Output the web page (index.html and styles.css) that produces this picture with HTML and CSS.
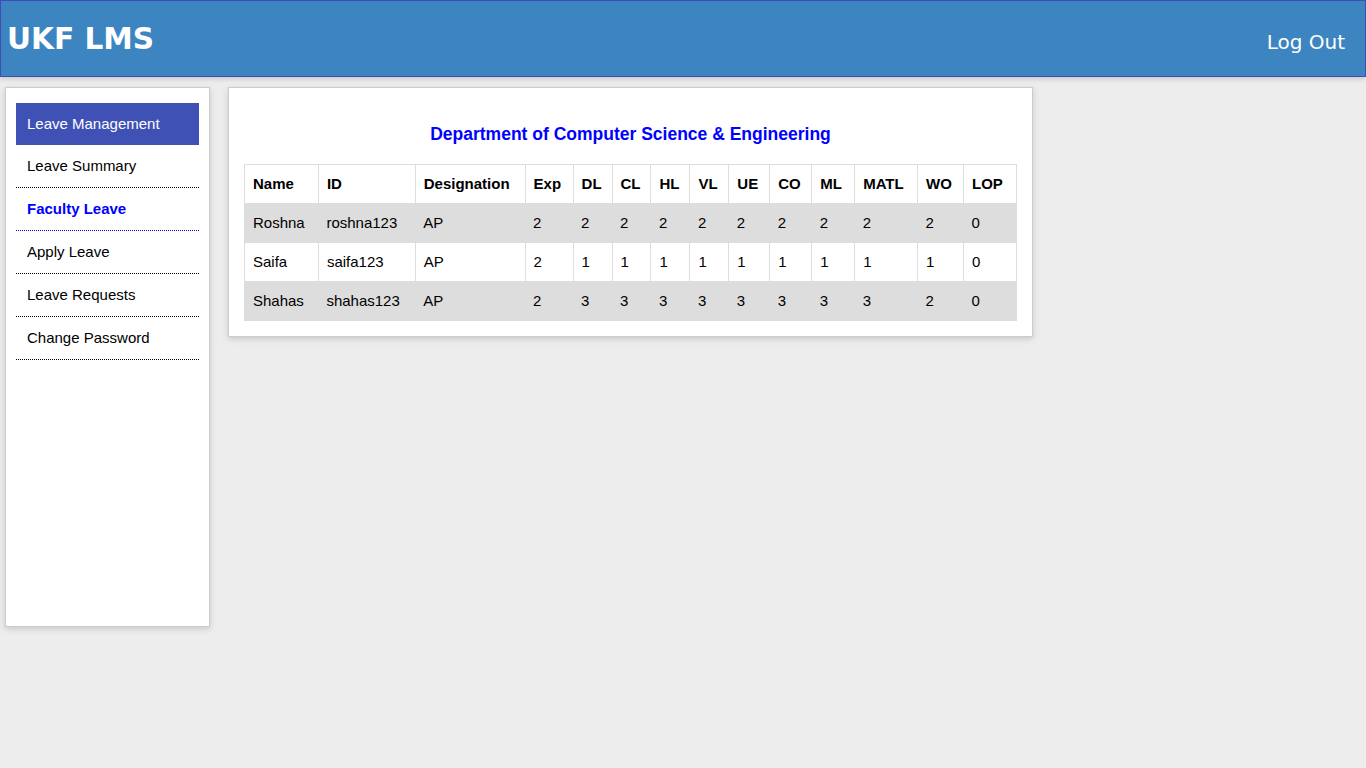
FILE: index.html
```html
<!DOCTYPE html>
<html>
<head>
<meta charset="utf-8">
<title>UKF LMS</title>
<link rel="stylesheet" href="styles.css">
</head>
<body>
<header class="topbar">
  <div class="brand">UKF LMS</div>
  <a class="logout" href="#">Log Out</a>
</header>
<div class="layout">
  <aside class="sidebar">
    <nav class="menu">
      <div class="menu-title">Leave Management</div>
      <a class="menu-item" href="#">Leave Summary</a>
      <a class="menu-item active" href="#">Faculty Leave</a>
      <a class="menu-item" href="#">Apply Leave</a>
      <a class="menu-item" href="#">Leave Requests</a>
      <a class="menu-item" href="#">Change Password</a>
    </nav>
  </aside>
  <main class="card">
    <h3 class="dept">Department of Computer Science &amp; Engineering</h3>
    <table class="leave-table">
      <thead>
        <tr>
          <th class="c-name">Name</th><th class="c-id">ID</th><th class="c-des">Designation</th><th class="c-exp">Exp</th>
          <th class="c-dl">DL</th><th class="c-cl">CL</th><th class="c-hl">HL</th><th class="c-vl">VL</th>
          <th class="c-ue">UE</th><th class="c-co">CO</th><th class="c-ml">ML</th><th class="c-matl">MATL</th>
          <th class="c-wo">WO</th><th class="c-lop">LOP</th>
        </tr>
      </thead>
      <tbody>
        <tr><td>Roshna</td><td>roshna123</td><td>AP</td><td>2</td><td>2</td><td>2</td><td>2</td><td>2</td><td>2</td><td>2</td><td>2</td><td>2</td><td>2</td><td>0</td></tr>
        <tr><td>Saifa</td><td>saifa123</td><td>AP</td><td>2</td><td>1</td><td>1</td><td>1</td><td>1</td><td>1</td><td>1</td><td>1</td><td>1</td><td>1</td><td>0</td></tr>
        <tr><td>Shahas</td><td>shahas123</td><td>AP</td><td>2</td><td>3</td><td>3</td><td>3</td><td>3</td><td>3</td><td>3</td><td>3</td><td>3</td><td>2</td><td>0</td></tr>
      </tbody>
    </table>
  </main>
</div>
</body>
</html>
```
FILE: styles.css
```css
html, body {
  margin: 0;
  padding: 0;
}
body {
  background: #ededed;
  font-family: "Liberation Sans", Arial, sans-serif;
  font-size: 15px;
  color: #000;
  height: 768px;
}
.topbar {
  height: 75px;
  background: #3d85c0;
  border: 1px solid #3f4cb5;
  display: flex;
  align-items: center;
  justify-content: space-between;
  box-shadow: 0 2px 5px rgba(0,0,0,0.16);
  position: relative;
}
.brand {
  font-family: "DejaVu Sans", Verdana, sans-serif;
  font-weight: bold;
  font-size: 29.6px;
  color: #fff;
  padding-left: 6px;
  margin-top: 0;
}
.logout {
  font-family: "DejaVu Sans", Verdana, sans-serif;
  font-size: 20px;
  color: #fff;
  text-decoration: none;
  padding-right: 20px;
  margin-top: 6px;
}
.layout {
  display: flex;
  align-items: flex-start;
  padding: 10px 0 0 5px;
  gap: 18px;
}
.sidebar {
  width: 183px;
  height: 523px;
  padding: 15px 10px 0 10px;
  background: #fff;
  border: 1px solid #ccc;
  box-shadow: 0 2px 5px rgba(0,0,0,0.10), 0 2px 10px rgba(0,0,0,0.06);
}
.menu {
  display: flex;
  flex-direction: column;
}
.menu-title {
  background: #3f51b5;
  color: #fff;
  height: 42px;
  line-height: 42px;
  padding-left: 11px;
}
.menu-item {
  display: block;
  height: 42px;
  line-height: 42px;
  padding-left: 11px;
  color: #000;
  text-decoration: none;
  border-bottom: 1px dotted #000;
}
.menu-item.active {
  color: #0000ff;
  font-weight: bold;
  border-bottom-color: #0000ff;
}
.card {
  width: 773px;
  padding: 0 15px 15px 15px;
  background: #fff;
  border: 1px solid #ccc;
  box-shadow: 0 2px 5px rgba(0,0,0,0.10), 0 2px 10px rgba(0,0,0,0.06);
}
.dept {
  margin: 35px 0 19px 0;
  text-align: center;
  color: #0000ff;
  font-size: 17.5px;
  font-weight: bold;
  line-height: 22px;
}
.leave-table {
  width: 100%;
  border-collapse: collapse;
  border: 1px solid #ddd;
}
.leave-table tr {
  border-bottom: 1px solid #ddd;
}
.leave-table th,
.leave-table td {
  text-align: left;
  padding: 8px;
  line-height: 22px;
  font-size: 15px;
  border-left: 1px solid #ddd;
  white-space: nowrap;
}
.leave-table th {
  font-weight: bold;
}
.leave-table tbody tr:nth-child(odd) {
  background: #ddd;
}
.leave-table tbody td {
  border-left: none;
}
.leave-table tbody tr:nth-child(even) td {
  border-left: 1px solid #ddd;
}
.c-name { width: 57px; }
.c-id { width: 80px; }
.c-des { width: 93px; }
.c-exp { width: 31px; }
.c-dl, .c-cl, .c-hl, .c-vl { width: 22px; }
.c-ue { width: 24px; }
.c-co { width: 25px; }
.c-ml { width: 26px; }
.c-matl { width: 46px; }
.c-wo { width: 29px; }
.c-lop { width: 36px; }
```
